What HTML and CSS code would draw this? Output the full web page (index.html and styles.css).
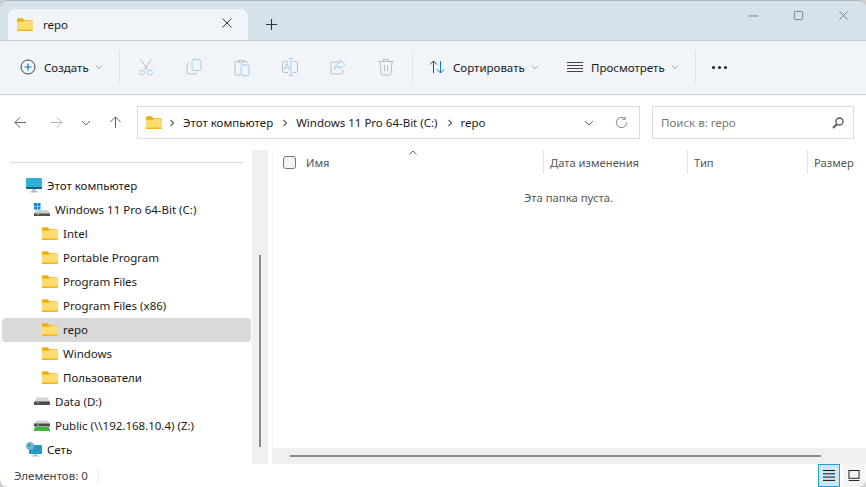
FILE: index.html
```html
<!DOCTYPE html>
<html lang="ru">

<head>
    <meta charset="UTF-8">
    <title>repo</title>
    <link rel="stylesheet" href="styles.css">
</head>

<body>
    <svg class="defs">
        <symbol id="folder" viewBox="0 0 16 13">
            <path d="M0 1.5A1.2 1.2 0 0 1 1.2.3h4.3l2 2h7.3A1.2 1.2 0 0 1 16 3.5V6H0z" fill="#edae0e"/>
            <path d="M0 3.8h6.5l1.5-1h6.8A1.2 1.2 0 0 1 16 4v7.8a1.2 1.2 0 0 1-1.2 1.2H1.2A1.2 1.2 0 0 1 0 11.800z" fill="#ffdc70"/>
            <path d="M0 11.500h16v.3a1.2 1.2 0 0 1-1.200 1.200H1.200A1.200 1.200 0 0 1 0 11.800z" fill="#f1b51c"/>
        </symbol>
        <symbol id="chev" viewBox="0 0 10 10">
            <path d="M1.500 3.500 5 7l3.500-3.500" fill="none" stroke="currentColor" stroke-width="1"/>
        </symbol>
        <symbol id="crumb" viewBox="0 0 8 10">
            <path d="M2.500 2 5.500 5l-3 3" fill="none" stroke="#666" stroke-width="1.300"/>
        </symbol>
        <symbol id="drive" viewBox="0 0 16 8">
            <path d="M2.500.5h11L15.500 5h-15z" fill="#d4d4d4"/>
            <rect x="0" y="4.500" width="16" height="3.500" rx=".8" fill="#4a4a4a"/>
            <rect x="3" y="5.500" width="2" height="1" fill="#5fe05f"/>
        </symbol>
    </svg>

    <div class="window">
        <div class="titlebar">
            <div class="tab">
                <svg class="folder"><use href="#folder"/></svg>
                <span class="tab-title">repo</span>
                <svg class="tab-close" viewBox="0 0 10 10"><path d="M.5.500l9 9m0-9-9 9" stroke="#333" fill="none"/></svg>
            </div>
            <svg class="tab-add" viewBox="0 0 10 10"><path d="M5 0v10M0 5h10" stroke="#333" fill="none"/></svg>
            <div class="controls">
                <svg viewBox="0 0 12 12"><path d="M1 6.500h10" stroke="#777" fill="none"/></svg>
                <svg viewBox="0 0 12 12"><rect x="1.500" y="1.500" width="9" height="9" rx="1.200" stroke="#777" fill="none"/></svg>
                <svg viewBox="0 0 12 12"><path d="M1.500 1.500l9 9m0-9-9 9" stroke="#777" fill="none"/></svg>
            </div>
        </div>

        <div class="toolbar">
            <div class="tool tool-new">
                <svg class="icon" viewBox="0 0 16 16"><circle cx="8" cy="8" r="7" stroke="#444" fill="none"/><path d="M8 4.500v7M4.500 8h7" stroke="#0a78d4" stroke-width="1.200" fill="none"/></svg>
                <span>Создать</span>
                <svg class="chev"><use href="#chev"/></svg>
            </div>
            <div class="sep"></div>
            <div class="tool-group">
                <svg class="icon-dim" viewBox="0 0 16 18"><path d="M2.500 1l7 10.500M13.500 1l-7 10.500" stroke="#bbb" fill="none"/><circle cx="4" cy="14.500" r="2.500" stroke="#a3cdf0" fill="none"/><circle cx="12" cy="14.500" r="2.500" stroke="#a3cdf0" fill="none"/></svg>
                <svg class="icon-dim" viewBox="0 0 16 18"><path d="M3 5.500H2.500a1.500 1.500 0 0 0-1.500 1.500v7a2 2 0 0 0 2 2h6a1.500 1.500 0 0 0 1.500-1.500" stroke="#bbb" fill="none"/><rect x="6" y="1.500" width="9" height="11" rx="2" stroke="#a3cdf0" fill="none"/></svg>
                <svg class="icon-dim" viewBox="0 0 16 18"><path d="M5 3.500H2.500A1.500 1.500 0 0 0 1 5v10.500A1.500 1.500 0 0 0 2.500 17H6M13 5V5a1.500 1.500 0 0 0-1.500-1.500H9M4.500 4.500V2.500h5v2z" stroke="#bbb" fill="none"/><rect x="7" y="7" width="8" height="10.500" rx="1.500" stroke="#a3cdf0" fill="none"/></svg>
                <svg class="icon-dim" viewBox="0 0 16 18"><path d="M6 3.500H2.500a2 2 0 0 0-2 2v7a2 2 0 0 0 2 2H6M11 3.500h2.500a2 2 0 0 1 2 2v7a2 2 0 0 1-2 2H11" stroke="#bbb" fill="none"/><path d="M9 .5v17M7 .5h4M7 17.500h4" stroke="#a3cdf0" fill="none"/><path d="M2.500 12l2.300-6.500h.4L7.500 12M3.300 10h3.400" stroke="#a3cdf0" fill="none"/></svg>
                <svg class="icon-dim" viewBox="0 0 16 18"><path d="M9 4H2.500A1.500 1.500 0 0 0 1 5.500v9A1.500 1.500 0 0 0 2.500 16h9a1.500 1.500 0 0 0 1.500-1.500V12" stroke="#bbb" fill="none"/><path d="M10 2l5 4.500-5 4.500V8.500c-3 0-4.500 1-6 3 .3-3.500 2.500-6 6-6.500z" stroke="#a3cdf0" fill="none"/></svg>
                <svg class="icon-dim" viewBox="0 0 16 18"><path d="M.5 3.500h15M5.500 3V1.500h5V3M2 4l1.200 12.300a1 1 0 0 0 1 .7h7.600a1 1 0 0 0 1-.7L14 4M6.500 7v6.500M9.500 7v6.500" stroke="#bbb" fill="none"/></svg>
            </div>
            <div class="sep"></div>
            <div class="tool tool-sort">
                <svg class="icon" viewBox="0 0 16 16"><path d="M4.500 14V2M1 5.500l3.500-3.500L8 5.500" stroke="#444" fill="none"/><path d="M11.500 2v12M8 10.500l3.500 3.500 3.500-3.500" stroke="#0a78d4" fill="none"/></svg>
                <span>Сортировать</span>
                <svg class="chev"><use href="#chev"/></svg>
            </div>
            <div class="tool tool-view">
                <svg class="icon" viewBox="0 0 16 16"><path d="M0 3.500h16M0 6.500h16M0 9.500h16M0 12.500h16" stroke="#444" fill="none"/></svg>
                <span>Просмотреть</span>
                <svg class="chev"><use href="#chev"/></svg>
            </div>
            <div class="sep"></div>
            <div class="dots"><i></i><i></i><i></i></div>
        </div>

        <div class="navbar">
            <div class="nav-buttons">
                <svg viewBox="0 0 14 14"><path d="M13 7H1M6.500 1.500 1 7l5.500 5.500" stroke="#555" fill="none"/></svg>
                <svg viewBox="0 0 14 14"><path d="M1 7h12M7.500 1.500 13 7l-5.500 5.500" stroke="#aaa" fill="none"/></svg>
                <svg class="nav-down" viewBox="0 0 10 10"><path d="M1 3l4 4 4-4" stroke="#666" fill="none"/></svg>
                <svg viewBox="0 0 14 14"><path d="M7 13V1M1.500 6.500 7 1l5.500 5.500" stroke="#555" fill="none"/></svg>
            </div>
            <div class="address">
                <svg class="folder"><use href="#folder"/></svg>
                <svg class="crumb"><use href="#crumb"/></svg>
                <span class="crumb-text">Этот компьютер</span>
                <svg class="crumb"><use href="#crumb"/></svg>
                <span class="crumb-text">Windows 11 Pro 64-Bit (C:)</span>
                <svg class="crumb"><use href="#crumb"/></svg>
                <span class="crumb-text">repo</span>
                <svg class="addr-down" viewBox="0 0 10 10"><path d="M1 3l4 4 4-4" stroke="#666" fill="none"/></svg>
                <svg class="addr-refresh" viewBox="0 0 14 14"><path d="M12.500 7A5.500 5.500 0 1 1 10.500 2.800M11 .5v3H8" stroke="#777" fill="none"/></svg>
            </div>
            <div class="search">
                <span>Поиск в: repo</span>
                <svg viewBox="0 0 12 12"><circle cx="7.500" cy="4.500" r="3.500" stroke="#555" stroke-width="1.300" fill="none"/><path d="M5 7l-4 4" stroke="#555" stroke-width="1.800" fill="none"/></svg>
            </div>
        </div>

        <div class="main">
            <div class="sidebar">
                <div class="side-line"></div>
                <ul class="tree">
                    <li class="level-1">
                        <svg class="pc" viewBox="0 0 16 15"><rect width="16" height="11" rx="1" fill="#2fb0d5"/><path d="M0 9h16v1a1 1 0 0 1-1 1H1a1 1 0 0 1-1-1z" fill="#17607f"/><path d="M6.500 11h3v2h-3zM4.500 13h7v1.500h-7z" fill="#b5bcc2"/></svg>
                        Этот компьютер
                    </li>
                    <li class="level-2">
                        <svg class="drive-c" viewBox="0 0 16 13"><rect width="3" height="3" fill="#0a84e0"/><rect x="3.500" width="3" height="3" fill="#0a84e0"/><rect y="3.500" width="3" height="3" fill="#0a84e0"/><rect x="3.500" y="3.500" width="3" height="3" fill="#0a84e0"/><path d="M2 7h12l2 3v3H0v-3z" fill="#cfcfcf"/><rect y="10.500" width="16" height="2.500" fill="#505050"/><rect x="3" y="11" width="2" height="1" fill="#5fe05f"/></svg>
                        Windows 11 Pro 64-Bit (C:)
                    </li>
                    <li class="level-3"><svg class="folder"><use href="#folder"/></svg>Intel</li>
                    <li class="level-3"><svg class="folder"><use href="#folder"/></svg>Portable Program</li>
                    <li class="level-3"><svg class="folder"><use href="#folder"/></svg>Program Files</li>
                    <li class="level-3"><svg class="folder"><use href="#folder"/></svg>Program Files (x86)</li>
                    <li class="level-3 selected"><svg class="folder"><use href="#folder"/></svg>repo</li>
                    <li class="level-3"><svg class="folder"><use href="#folder"/></svg>Windows</li>
                    <li class="level-3"><svg class="folder"><use href="#folder"/></svg>Пользователи</li>
                    <li class="level-2"><svg class="drive"><use href="#drive"/></svg>Data (D:)</li>
                    <li class="level-2">
                        <svg class="drive drive-net" viewBox="0 0 16 11"><path d="M2.500.5h11L15.500 4h-15z" fill="#d4d4d4"/><rect y="3.500" width="16" height="3" fill="#4a4a4a"/><rect x="3" y="4.500" width="2" height="1" fill="#5fe05f"/><path d="M1 7h14l1 3v1H0v-1z" fill="#3fb53f"/></svg>
                        Public (\\192.168.10.4) (Z:)
                    </li>
                    <li class="level-1">
                        <svg class="pc" viewBox="0 0 16 15"><rect x="3" y="3" width="13" height="9" rx="1" fill="#2297c8"/><path d="M8 12h3v1.500H8zM6 13.500h7v1H6z" fill="#b5bcc2"/><circle cx="4" cy="4" r="4" fill="#6fb4e0"/><path d="M2 2.500l2-1 1 2-2 2z" fill="#4d9a55"/></svg>
                        Сеть
                    </li>
                </ul>
            </div>
            <div class="side-scroll"><div class="side-thumb"></div></div>
            <div class="content">
                <div class="sort-arrow-row">
                    <svg class="sort-arrow" viewBox="0 0 8 5"><path d="M.5 4.500 4 1l3.500 3.500" stroke="#666" fill="none"/></svg>
                </div>
                <div class="columns">
                    <div class="col col-name"><span class="checkbox"></span>Имя</div>
                    <div class="col col-date">Дата изменения</div>
                    <div class="col col-type">Тип</div>
                    <div class="col col-size">Размер</div>
                </div>
                <div class="empty">Эта папка пуста.</div>
                <div class="h-scroll"><div class="h-thumb"></div></div>
            </div>
        </div>

        <div class="statusbar">
            <span class="count">Элементов: 0</span>
            <div class="view-buttons">
                <div class="view-btn active">
                    <svg viewBox="0 0 12 11"><path d="M0 .5h12M0 3.800h12M0 7.100h12M0 10.400h12" stroke="#111" fill="none"/></svg>
                </div>
                <div class="view-btn">
                    <svg viewBox="0 0 12 12"><rect x=".5" y=".5" width="11" height="8.500" stroke="#111" fill="none"/><path d="M0 11.500h12" stroke="#111" fill="none"/></svg>
                </div>
            </div>
        </div>
    </div>
</body>

</html>
```

FILE: styles.css
```css
* {
    box-sizing: border-box;
}

html,
body {
    margin: 0;
    padding: 0;
    height: 100%;
    overflow: hidden;
    background: #cfcfcf;
}

body {
    font-family: "Noto Sans", sans-serif;
    font-size: 11.5px;
    color: #1a1a1a;
}

svg {
    display: block;
    flex: none;
}

.defs {
    display: none;
}

.window {
    display: flex;
    flex-direction: column;
    width: 866px;
    height: 487px;
    background: #fff;
    border-radius: 8px;
    overflow: hidden;
    border-top: 1px solid #aeb3b7;
}

/* title bar */
.titlebar {
    display: flex;
    align-items: flex-end;
    flex: none;
    height: 39px;
    padding-left: 8px;
    background: #d6e1ea;
}

.tab {
    display: flex;
    align-items: center;
    width: 240px;
    height: 31px;
    padding: 0 16px 1px 9px;
    background: #f1f5f9;
    border-radius: 8px 8px 0 0;
}

.folder {
    width: 16px;
    height: 13px;
}

.tab-title {
    margin-left: 10px;
}

.tab-close {
    width: 10px;
    height: 10px;
    margin-left: auto;
    margin-bottom: 2px;
}

.tab-add {
    width: 11px;
    height: 11px;
    margin: 0 0 10px 18px;
}

.controls {
    display: flex;
    align-items: center;
    gap: 34px;
    margin-left: auto;
    margin-right: 17px;
    margin-bottom: 19px;
}

.controls svg {
    width: 11px;
    height: 11px;
}

/* command bar */
.toolbar {
    display: flex;
    align-items: center;
    flex: none;
    height: 55px;
    padding: 0 0 1px 20px;
    background: #f1f5f9;
    border-top: 1px solid #c5d0da;
    border-bottom: 1px solid #c5d0da;
}

.tool {
    display: flex;
    align-items: center;
    white-space: nowrap;
}

.icon {
    width: 16px;
    height: 16px;
}

.chev {
    width: 8px;
    height: 8px;
    color: #888;
}

.tool span {
    margin-left: 8px;
}

.tool .chev {
    margin-left: 6px;
}

.tool-new {
    width: 99px;
}

.sep {
    width: 1px;
    height: 32px;
    background: #dfe3e7;
}

.tool-group {
    display: flex;
    align-items: center;
    gap: 32px;
    padding: 0 18px 0 18px;
    width: 292px;
}

.icon-dim {
    width: 16px;
    height: 18px;
}

.tool-sort {
    margin-left: 16px;
    width: 138px;
}

.tool-view {
    width: 128px;
}

.dots {
    display: flex;
    gap: 3px;
    margin-left: 16px;
}

.dots i {
    width: 3px;
    height: 3px;
    border-radius: 50%;
    background: #222;
}

/* address row */
.navbar {
    display: flex;
    align-items: center;
    flex: none;
    height: 55px;
    padding: 0 12px 0 14px;
}

.nav-buttons {
    display: flex;
    align-items: center;
    width: 123px;
}

.nav-buttons svg {
    width: 13px;
    height: 13px;
    margin-right: 23px;
}

.nav-buttons .nav-down {
    width: 10px;
    height: 10px;
    margin-left: -5px;
    margin-right: 18px;
}

.address {
    display: flex;
    align-items: center;
    width: 503px;
    height: 33px;
    padding: 0 11px 0 8px;
    border: 1px solid #dcdcdc;
}

.crumb {
    width: 8px;
    height: 10px;
    margin: 0 7px 0 6px;
}

.crumb-text {
    margin-right: 2px;
}

.addr-down {
    width: 10px;
    height: 10px;
    margin-left: auto;
    margin-right: 21px;
}

.addr-refresh {
    width: 13px;
    height: 13px;
}

.search {
    display: flex;
    align-items: center;
    justify-content: space-between;
    width: 202px;
    height: 33px;
    margin-left: 12px;
    padding: 0 9px 0 8px;
    border: 1px solid #dcdcdc;
    color: #777;
}

.search svg {
    width: 12px;
    height: 12px;
}

/* body */
.main {
    display: flex;
    flex: 1;
    min-height: 0;
}

.sidebar {
    width: 252px;
    flex: none;
    padding-top: 12px;
}

.side-line {
    height: 1px;
    margin: 0 9px 0 10px;
    background: #d9d9d9;
}

.tree {
    list-style: none;
    margin: 11px 1px 0 2px;
    padding: 0;
}

.tree li {
    display: flex;
    align-items: center;
    height: 24px;
    padding-bottom: 2px;
    border-radius: 4px;
    white-space: nowrap;
}

.level-1 {
    padding-left: 24px;
}

.level-2 {
    padding-left: 32px;
}

.level-3 {
    padding-left: 40px;
}

.tree li.selected {
    background: #d9d9d9;
}

.tree .folder {
    margin-right: 5px;
}

.pc {
    width: 16px;
    height: 15px;
    margin-right: 5px;
}

.drive-c {
    width: 16px;
    height: 13px;
    margin-right: 5px;
}

.drive {
    width: 16px;
    height: 8px;
    margin-right: 5px;
}

.drive-net {
    height: 11px;
}

.side-scroll {
    display: flex;
    flex: none;
    justify-content: center;
    align-items: flex-end;
    width: 16px;
    padding-bottom: 17px;
    background: #f0f0f0;
}

.side-thumb {
    width: 2px;
    height: 192px;
    background: #8a8a8a;
}

.content {
    display: flex;
    flex-direction: column;
    flex: 1;
    min-width: 0;
    margin-left: 4px;
    border-left: 1px solid #f4f4f4;
}

.sort-arrow-row {
    flex: none;
    height: 0;
}

.sort-arrow {
    width: 8px;
    height: 5px;
    margin: 0 0 0 136px;
}

.columns {
    display: flex;
    flex: none;
    height: 24px;
    font-size: 11.2px;
    color: #555;
}

.col {
    display: flex;
    align-items: center;
    padding-left: 6px;
    white-space: nowrap;
}

.col-name {
    width: 270px;
    padding-left: 10px;
}

.col-date,
.col-type,
.col-size {
    border-left: 1px solid #e5e5e5;
}

.col-date {
    width: 144px;
}

.col-type {
    width: 120px;
}

.col-size {
    flex: 1;
}

.checkbox {
    width: 13px;
    height: 13px;
    margin-right: 10px;
    background: #f4f4f4;
    border: 1px solid #777;
    border-radius: 3px;
}

.empty {
    flex: 1;
    margin-top: 16px;
    padding-right: 2px;
    text-align: center;
    font-size: 11.3px;
    color: #555;
}

.h-scroll {
    display: flex;
    align-items: center;
    flex: none;
    height: 16px;
    padding-left: 17px;
    background: #f0f0f0;
}

.h-thumb {
    width: 531px;
    height: 2px;
    background: #8a8a8a;
}

.statusbar {
    display: flex;
    align-items: center;
    justify-content: space-between;
    flex: none;
    height: 23px;
    padding: 0 1px 0 14px;
}

.count {
    padding-right: 10px;
    color: #444;
    border-right: 1px solid #eee;
}

.view-buttons {
    display: flex;
    gap: 3px;
    height: 23px;
}

.view-btn {
    display: flex;
    align-items: center;
    justify-content: center;
    width: 22px;
    background: #f5f5f5;
}

.view-btn.active {
    background: #cce8f6;
    border: 1px solid #1ea0e0;
}

.view-btn svg {
    width: 12px;
    height: 11px;
}
```
